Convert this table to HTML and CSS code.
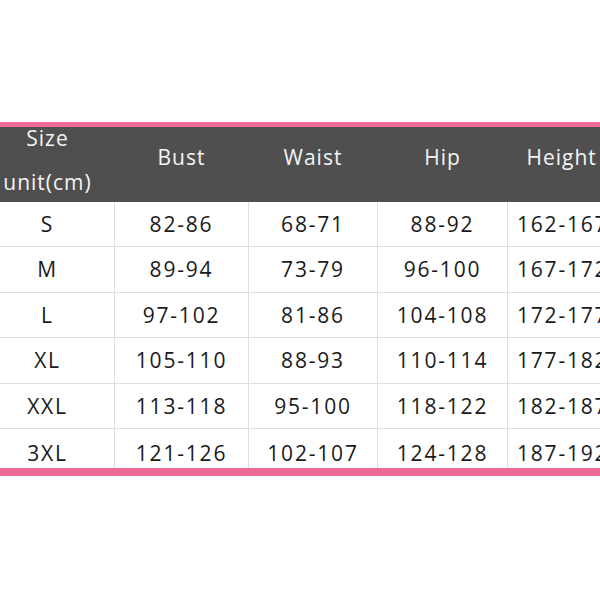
FILE: index.html
```html
<!DOCTYPE html>
<html>
<head>
<meta charset="utf-8">
<link rel="stylesheet" href="styles.css">
</head>
<body>
<div class="frame">
  <table class="sizes">
    <colgroup>
      <col class="c1"><col class="c2"><col class="c3"><col class="c4"><col class="c5">
    </colgroup>
    <thead>
      <tr class="head-row">
        <th class="first"><div class="two-line"><span>Size</span><span>unit(cm)</span></div></th>
        <th>Bust</th>
        <th>Waist</th>
        <th>Hip</th>
        <th class="left">Height</th>
      </tr>
    </thead>
    <tbody>
      <tr><td>S</td><td>82-86</td><td>68-71</td><td>88-92</td><td class="left">162-167</td></tr>
      <tr><td>M</td><td>89-94</td><td>73-79</td><td>96-100</td><td class="left">167-172</td></tr>
      <tr><td>L</td><td>97-102</td><td>81-86</td><td>104-108</td><td class="left">172-177</td></tr>
      <tr><td>XL</td><td>105-110</td><td>88-93</td><td>110-114</td><td class="left">177-182</td></tr>
      <tr><td>XXL</td><td>113-118</td><td>95-100</td><td>118-122</td><td class="left">182-187</td></tr>
      <tr class="last"><td>3XL</td><td>121-126</td><td>102-107</td><td>124-128</td><td class="left">187-192</td></tr>
    </tbody>
  </table>
</div>
</body>
</html>
```
FILE: styles.css
```css
html, body {
  margin: 0;
  padding: 0;
  background: #ffffff;
}
body {
  width: 600px;
  height: 600px;
  overflow: hidden;
  font-family: "Open Sans", "Noto Sans", sans-serif;
}
.frame {
  padding-top: 122px;
  overflow: hidden;
}
.sizes {
  margin-left: -20px;
  border-collapse: collapse;
  table-layout: fixed;
  width: 657px;
  border-top: 5px solid #f06a96;
  border-bottom: 8px solid #f06a96;
}
.c1 { width: 134px; }
.c2 { width: 134px; }
.c3 { width: 129px; }
.c4 { width: 130px; }
.c5 { width: 130px; }
.head-row {
  height: 77px;
}
.sizes th {
  background: #4f4f4f;
  color: #f4f4f4;
  font-weight: 400;
  font-size: 21px;
  letter-spacing: 1px;
  padding: 0 0 14px 0;
  text-align: center;
  vertical-align: middle;
}
.sizes th.first {
  padding-bottom: 8px;
}
.sizes th.left {
  text-align: left;
  padding-left: 19px;
}
.two-line {
  display: flex;
  flex-direction: column;
  align-items: center;
  gap: 16px;
  line-height: 28px;
  margin-top: -8px;
  margin-bottom: -8px;
}
.sizes td {
  height: 44.5px;
  padding: 0;
  font-size: 21px;
  letter-spacing: 1.8px;
  color: #1a1a1a;
  text-align: center;
  vertical-align: middle;
  border: 1px solid #dedede;
}
.sizes tbody tr:first-child td { border-top: none; }
.sizes tbody tr.last td {
  border-bottom: none;
  height: 30px;
  padding-top: 9px;
  line-height: 30px;
}
.sizes td.left {
  text-align: left;
  padding-left: 9px;
}
```
